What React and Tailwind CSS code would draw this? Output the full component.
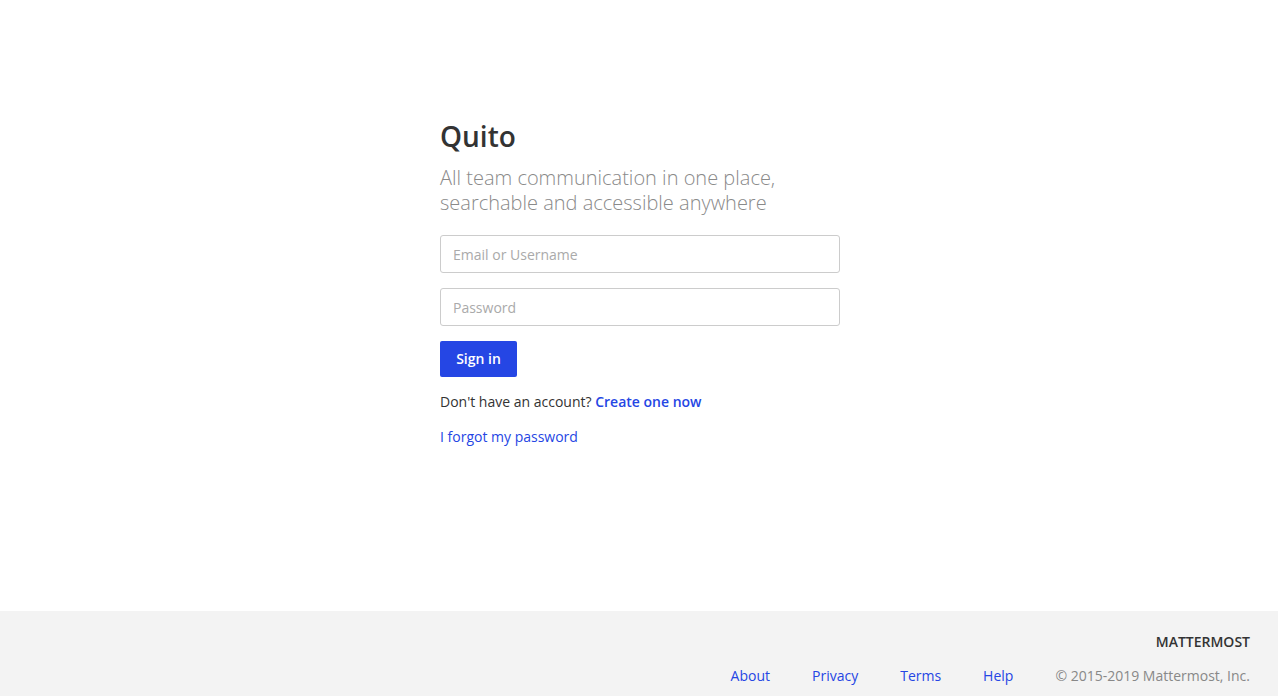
import React from 'react';

const links = ['About', 'Privacy', 'Terms', 'Help'];

export default function App() {
  return (
    <div
      className="flex min-h-screen flex-col bg-white text-[#333]"
      style={{ fontFamily: '"Open Sans", "Liberation Sans", sans-serif' }}
    >
      <main className="flex flex-1 justify-center pl-[2px] pt-[116px]">
        <div className="w-[400px]">
          <h1 className="text-[28px] font-semibold leading-[40px] text-[#333]">Quito</h1>
          <h3 className="mt-[9px] text-[20px] font-light leading-[25px] text-[#8a8a8a]">
            All team communication in one place,
            <br />
            searchable and accessible anywhere
          </h3>

          <form className="mt-[20px] flex flex-col" onSubmit={(e) => e.preventDefault()}>
            <input
              type="text"
              placeholder="Email or Username"
              className="h-[38px] w-full rounded-[3px] border border-[#ccc] px-3 text-sm outline-none placeholder:text-[#aaa]"
            />
            <input
              type="password"
              placeholder="Password"
              className="mt-[15px] h-[38px] w-full rounded-[3px] border border-[#ccc] px-3 text-sm outline-none placeholder:text-[#aaa]"
            />
            <div className="mt-[15px]">
              <button
                type="submit"
                className="h-[36px] w-[77px] rounded-[2px] bg-[#2546e4] text-sm font-semibold text-white"
              >
                Sign in
              </button>
            </div>
          </form>

          <p className="mt-[15px] text-sm leading-5">
            Don't have an account?{' '}
            <a href="#" className="font-semibold text-[#2546e4]">
              Create one now
            </a>
          </p>
          <p className="mt-[15px] text-sm leading-5">
            <a href="#" className="text-[#2546e4]">
              I forgot my password
            </a>
          </p>
        </div>
      </main>

      <footer className="flex h-[85px] flex-col items-end bg-[#f3f3f3] px-[28px] pt-[21px]">
        <div className="text-sm font-semibold leading-5 text-[#333]">MATTERMOST</div>
        <div className="mt-[14px] flex items-center text-sm leading-5">
          {links.map((l) => (
            <a key={l} href="#" className="mr-[42px] text-[#2546e4]">
              {l}
            </a>
          ))}
          <span className="text-[#888]">© 2015-2019 Mattermost, Inc.</span>
        </div>
      </footer>
    </div>
  );
}
